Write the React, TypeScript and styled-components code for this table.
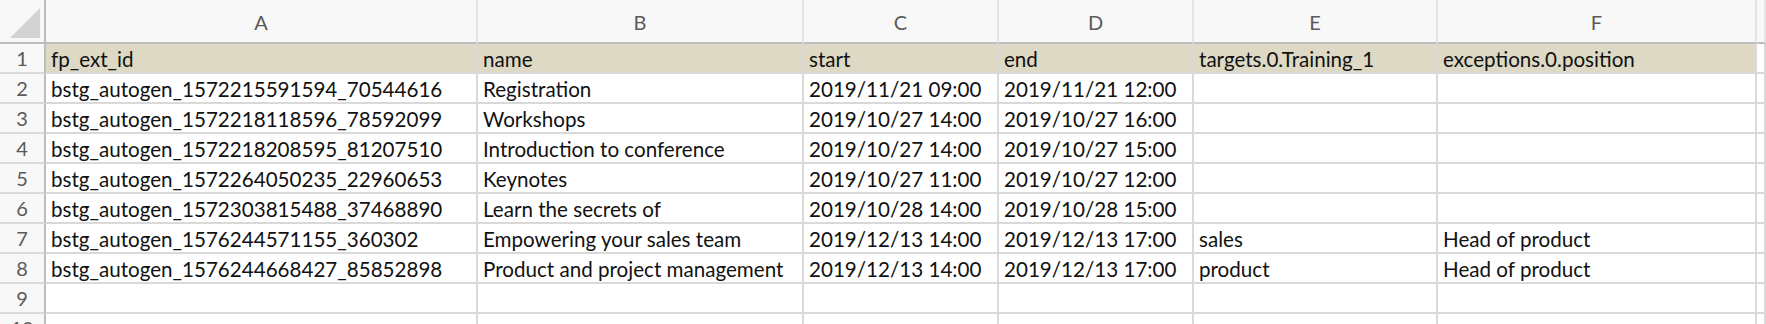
import React from "react";
import styled, { createGlobalStyle } from "styled-components";

const gridLine = "#d9d9d9";
const headLine = "#bdbdbd";
const fontStack = "Lato, 'Open Sans', 'Liberation Sans', sans-serif";

const GlobalStyle = createGlobalStyle`
  html, body {
    margin: 0;
    padding: 0;
    background: #ffffff;
    overflow: hidden;
  }
  body {
    font-family: ${fontStack};
  }
`;

const Sheet = styled.div`
  display: grid;
  grid-template-columns: 46px 432px 326px 195px 195px 244px 319px 1fr;
  grid-auto-rows: 30px;
  grid-template-rows: 44px;
  width: 100%;
  height: 324px;
  overflow: hidden;
`;

const Corner = styled.div`
  background: #f8f8f8;
  border-right: 2px solid ${headLine};
  border-bottom: 2px solid ${headLine};
  box-sizing: border-box;
  display: flex;
  align-items: flex-end;
  justify-content: flex-end;
  padding: 0 4px 4px 0;
`;

const ColHead = styled.div`
  background: #f8f8f8;
  border-right: 2px solid #e4e4e4;
  border-bottom: 2px solid ${headLine};
  box-sizing: border-box;
  display: flex;
  align-items: center;
  justify-content: center;
  padding-top: 2px;
  color: #5a5a5a;
  font-size: 20px;
`;

const RowHead = styled.div`
  background: #f8f8f8;
  border-right: 2px solid ${headLine};
  border-bottom: 2px solid ${gridLine};
  box-sizing: border-box;
  display: flex;
  align-items: center;
  justify-content: center;
  color: #5a5a5a;
  font-size: 20px;
`;

const Cell = styled.div<{ $header?: boolean }>`
  background: ${p => (p.$header ? "#ddd9c4" : "#ffffff")};
  border-right: 2px solid ${gridLine};
  border-bottom: 2px solid ${gridLine};
  box-sizing: border-box;
  display: flex;
  align-items: center;
  padding: 1px 0 0 5px;
  color: #111111;
  font-size: 20.6px;
  white-space: nowrap;
  overflow: hidden;
`;

const columns = ["A", "B", "C", "D", "E", "F", ""];

const rows: string[][] = [
  ["fp_ext_id", "name", "start", "end", "targets.0.Training_1", "exceptions.0.position"],
  ["bstg_autogen_1572215591594_70544616", "Registration", "2019/11/21 09:00", "2019/11/21 12:00", "", ""],
  ["bstg_autogen_1572218118596_78592099", "Workshops", "2019/10/27 14:00", "2019/10/27 16:00", "", ""],
  ["bstg_autogen_1572218208595_81207510", "Introduction to conference", "2019/10/27 14:00", "2019/10/27 15:00", "", ""],
  ["bstg_autogen_1572264050235_22960653", "Keynotes", "2019/10/27 11:00", "2019/10/27 12:00", "", ""],
  ["bstg_autogen_1572303815488_37468890", "Learn the secrets of", "2019/10/28 14:00", "2019/10/28 15:00", "", ""],
  ["bstg_autogen_1576244571155_360302", "Empowering your sales team", "2019/12/13 14:00", "2019/12/13 17:00", "sales", "Head of product"],
  ["bstg_autogen_1576244668427_85852898", "Product and project management", "2019/12/13 14:00", "2019/12/13 17:00", "product", "Head of product"],
  ["", "", "", "", "", ""],
  ["", "", "", "", "", ""],
];

const CornerMark = () => (
  <svg width="30" height="30" viewBox="0 0 30 30">
    <polygon points="30,0 30,30 0,30" fill="#d3d3d3" />
  </svg>
);

const App = () => {
  return (
    <>
      <GlobalStyle />
      <Sheet>
        <Corner><CornerMark /></Corner>
        {columns.map((c, i) => (
          <ColHead key={"h" + i}>{c}</ColHead>
        ))}
        {rows.map((row, r) => (
          <React.Fragment key={"r" + r}>
            <RowHead>{r + 1}</RowHead>
            {row.map((value, c) => (
              <Cell key={c} $header={r === 0}>{value}</Cell>
            ))}
            <Cell $header={false}></Cell>
          </React.Fragment>
        ))}
      </Sheet>
    </>
  );
};

export default App;
